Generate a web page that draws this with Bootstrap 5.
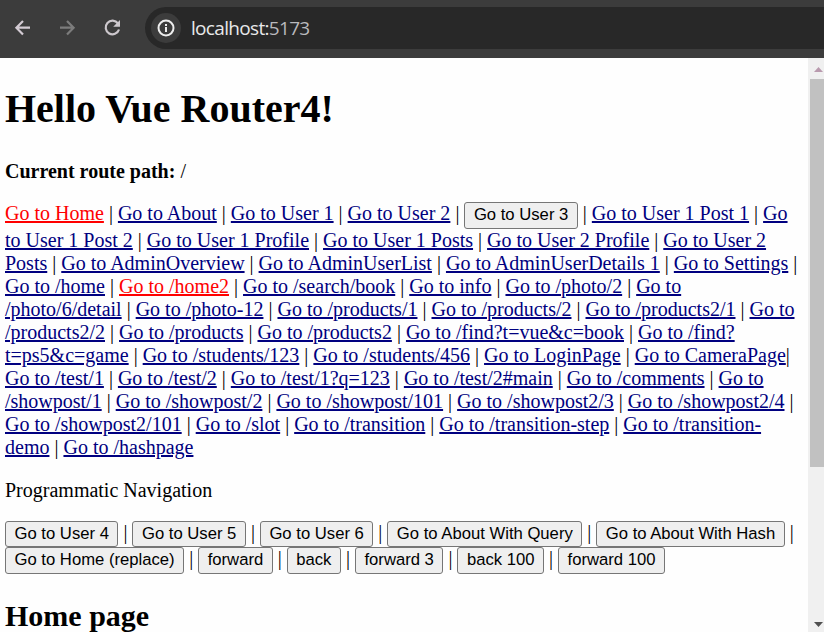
<!DOCTYPE html>
<html lang="en">
<head>
<meta charset="utf-8">
<meta name="viewport" content="width=device-width, initial-scale=1">
<title>Hello Vue Router4!</title>
<link href="https://cdn.jsdelivr.net/npm/bootstrap@5.3.0/dist/css/bootstrap.min.css" rel="stylesheet">
<style>
body{font-family:"Liberation Serif","Times New Roman",serif;font-size:20px;line-height:23px;color:#000;background:#fefefe}
.browser-bar{height:58px;background:#3c3c3c}
.tool-icons{padding-left:11px}
.tool-icon{width:24px;height:24px;margin-right:21px}
.address{height:42px;margin-left:-1px;margin-top:-2px;padding-left:6px;background:#282828;border-radius:21px 0 0 21px}
.site-info{width:30px;height:30px;background:#3c3c3c}
.url{font:19px/26px "Open Sans","Noto Sans",sans-serif;color:#e8e8ea;margin-left:10px;letter-spacing:-.68px}
.port{color:#b9b9bd}
.viewport-area{min-height:0}
.page{width:808px;padding:28px 10px 0 5px}
.page h1{font-size:40px;line-height:46px;font-weight:700;margin:0 0 28px}
.page h2{font-size:30px;line-height:34px;font-weight:700;margin:25px 0 0}
.page p{margin:0 0 20px}
.page p.route-path{margin-bottom:19px}
.page p.section-label{margin-bottom:19px}
.page a{color:#000080;text-decoration:underline}
.page a.current{color:#f00}
.page button{font:16.667px/19px "Liberation Sans",Arial,sans-serif;color:#000;background:#efefef;border:1px solid #767676;border-radius:3px;padding:2.25px 8.5px 3.25px;margin:0}
.scroll-track{width:16px;background:#f0f0f0}
.scroll-thumb{width:14px;height:388px;background:#c1c1c1}
.scroll-cap{height:21px}
</style>
<script src="https://cdn.jsdelivr.net/npm/bootstrap@5.3.0/dist/js/bootstrap.bundle.min.js"></script>
</head>
<body class="vh-100 overflow-hidden d-flex flex-column">
<header class="browser-bar d-flex align-items-center flex-shrink-0">
<div class="tool-icons d-flex">
<svg class="tool-icon" viewBox="0 0 24 24" fill="none" stroke="#d3cbd3" stroke-width="2.200"><path d="M19 10.700H5.500M12 4l-6.600 6.700 6.600 6.700"/></svg>
<svg class="tool-icon" viewBox="0 0 24 24" fill="none" stroke="#7c7c7c" stroke-width="2.200"><path d="M4 10.700h13.500M11 4l6.600 6.700-6.600 6.700"/></svg>
<svg class="tool-icon" viewBox="0 0 24 24" fill="none" stroke="#cdc8cd" stroke-width="2.200"><path d="M17 6.500A6.800 6.800 0 1 0 18 12.500"/><path d="M19 3v6.800h-6.800z" fill="#cdc8cd" stroke="none"/></svg>
</div>
<div class="address d-flex align-items-center flex-grow-1">
<span class="site-info rounded-circle d-flex align-items-center justify-content-center"><svg width="18" height="18" viewBox="0 0 18 18" fill="none" stroke="#eee" stroke-width="2"><circle cx="9" cy="9" r="7.500"/><path d="M9 8v5M9 5v2"/></svg></span>
<span class="url">localhost:<span class="port">5173</span></span>
</div>
</header>
<div class="viewport-area d-flex flex-grow-1 overflow-hidden">
<main class="page flex-shrink-0">
<h1>Hello Vue Router4!</h1>
<p class="route-path"><strong>Current route path:</strong> /</p>
<p>
<a href="#" class="current">Go to Home</a> |
<a href="#">Go to About</a> |
<a href="#">Go to User 1</a> |
<a href="#">Go to User 2</a> |
<button>Go to User 3</button> |
<a href="#">Go to User 1 Post 1</a> |
<a href="#">Go to User 1 Post 2</a> |
<a href="#">Go to User 1 Profile</a> |
<a href="#">Go to User 1 Posts</a> |
<a href="#">Go to User 2 Profile</a> |
<a href="#">Go to User 2 Posts</a> |
<a href="#">Go to AdminOverview</a> |
<a href="#">Go to AdminUserList</a> |
<a href="#">Go to AdminUserDetails 1</a> |
<a href="#">Go to Settings</a> |
<a href="#">Go to /home</a> |
<a href="#" class="current">Go to /home2</a> |
<a href="#">Go to /search/book</a> |
<a href="#">Go to info</a> |
<a href="#">Go to /photo/2</a> |
<a href="#">Go to /photo/6/detail</a> |
<a href="#">Go to /photo-12</a> |
<a href="#">Go to /products/1</a> |
<a href="#">Go to /products/2</a> |
<a href="#">Go to /products2/1</a> |
<a href="#">Go to /products2/2</a> |
<a href="#">Go to /products</a> |
<a href="#">Go to /products2</a> |
<a href="#">Go to /find?t=vue&amp;c=book</a> |
<a href="#">Go to /find?t=ps5&amp;c=game</a> |
<a href="#">Go to /students/123</a> |
<a href="#">Go to /students/456</a> |
<a href="#">Go to LoginPage</a> |
<a href="#">Go to CameraPage</a>|
<a href="#">Go to /test/1</a> |
<a href="#">Go to /test/2</a> |
<a href="#">Go to /test/1?q=123</a> |
<a href="#">Go to /test/2#main</a> |
<a href="#">Go to /comments</a> |
<a href="#">Go to /showpost/1</a> |
<a href="#">Go to /showpost/2</a> |
<a href="#">Go to /showpost/101</a> |
<a href="#">Go to /showpost2/3</a> |
<a href="#">Go to /showpost2/4</a> |
<a href="#">Go to /showpost2/101</a> |
<a href="#">Go to /slot</a> |
<a href="#">Go to /transition</a> |
<a href="#">Go to /transition-step</a> |
<a href="#">Go to /transition-demo</a> |
<a href="#">Go to /hashpage</a>
</p>
<p class="section-label">Programmatic Navigation</p>
<div>
<button>Go to User 4</button> |
<button>Go to User 5</button> |
<button>Go to User 6</button> |
<button>Go to About With Query</button> |
<button>Go to About With Hash</button> |
<button>Go to Home (replace)</button> |
<button>forward</button> |
<button>back</button> |
<button>forward 3</button> |
<button>back 100</button> |
<button>forward 100</button>
</div>
<h2>Home page</h2>
</main>
<aside class="scroll-track d-flex flex-column align-items-end">
<div class="scroll-cap d-flex align-items-center"><svg class="d-block" width="14" height="21" viewBox="0 0 14 21"><path d="M4 14L8.500 9 13 14z" fill="#b99aae"/></svg></div>
<div class="scroll-thumb flex-shrink-0"></div>
<svg class="mt-auto" width="14" height="16" viewBox="0 0 14 16"><path d="M4 6h9L8.500 11z" fill="#505050"/></svg>
</aside>
</div>
</body>
</html>
